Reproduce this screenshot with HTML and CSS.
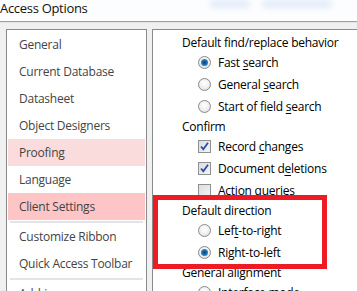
FILE: index.html
```html
<!DOCTYPE html>
<html>
<head>
<meta charset="utf-8">
<link rel="stylesheet" href="styles.css">
</head>
<body>
<div class="window">
  <div class="titlebar">
    <span class="title">Access Options</span>
    <span class="ghost ghost1"></span>
    <span class="ghost ghost2"></span>
  </div>
  <div class="body">
    <div class="nav">
      <div class="nav-item">General</div>
      <div class="nav-item">Current Database</div>
      <div class="nav-item">Datasheet</div>
      <div class="nav-item">Object Designers</div>
      <div class="nav-item hover">Proofing</div>
      <div class="nav-item">Language</div>
      <div class="nav-item selected">Client Settings</div>
      <div class="sep"></div>
      <div class="nav-item">Customize Ribbon</div>
      <div class="nav-item">Quick Access Toolbar</div>
      <div class="sep"></div>
      <div class="nav-item">Add-ins</div>
    </div>
    <div class="content">
      <div class="heading">Default find/replace behavior</div>
      <div class="opt"><span class="radio on"></span><span>Fast <u>s</u>earch</span></div>
      <div class="opt"><span class="radio"></span><span>General <u>s</u>earch</span></div>
      <div class="opt"><span class="radio"></span><span>Start of field <u>s</u>earch</span></div>
      <div class="heading">Confirm</div>
      <div class="opt"><span class="check on"><svg viewBox="0 0 13 13" width="13" height="13"><path d="M3 6.5 L5.3 9.2 L10 2.8" fill="none" stroke="#2a4fa8" stroke-width="1.8"/></svg></span><span>Record <u>c</u>hanges</span></div>
      <div class="opt"><span class="check on"><svg viewBox="0 0 13 13" width="13" height="13"><path d="M3 6.5 L5.3 9.2 L10 2.8" fill="none" stroke="#2a4fa8" stroke-width="1.8"/></svg></span><span>Document d<u>e</u>letions</span></div>
      <div class="opt"><span class="check"></span><span>Action queries</span></div>
      <div class="heading">Default direction</div>
      <div class="opt"><span class="radio"></span><span>Lef<u>t</u>-to-right</span></div>
      <div class="opt"><span class="radio on"></span><span>Ri<u>g</u>ht-to-left</span></div>
      <div class="heading">General alignment</div>
      <div class="opt"><span class="radio"></span><span>Interface mode</span></div>
      <div class="highlight-box"></div>
    </div>
  </div>
</div>
</body>
</html>
```

FILE: styles.css
```css
html, body {
  margin: 0;
  padding: 0;
  width: 357px;
  height: 291px;
  overflow: hidden;
  background: #f0f0f0;
}
.window {
  font-family: "Open Sans", "Noto Sans", sans-serif;
  font-size: 12px;
  color: #000;
  width: 357px;
  height: 291px;
  overflow: hidden;
}
.titlebar {
  position: relative;
  height: 21px;
  background: #fcfdfe;
  border-bottom: 1px solid #a0a0a0;
  overflow: hidden;
}
.title {
  position: relative;
  display: block;
  font-size: 13px;
  line-height: 16px;
  color: #111;
  letter-spacing: -0.3px;
  z-index: 1;
}
.ghost {
  position: absolute;
  top: 1px;
  height: 6px;
  border-radius: 3px;
  background: #8fb3e8;
  filter: blur(3px);
  opacity: 0.3;
}
.ghost1 { left: 210px; width: 40px; }
.ghost2 { left: 262px; width: 70px; }
.body {
  display: flex;
  gap: 5px;
  padding: 6px 0 0 6px;
  border-top: 1px solid #e4e4e4;
}
.nav {
  width: 141px;
  height: 300px;
  background: #fff;
  border: 1px solid #8a8a8a;
  padding: 1px 1px 0;
  box-sizing: border-box;
  flex: none;
}
.nav-item {
  height: 27px;
  line-height: 27px;
  padding-left: 11px;
  color: #444;
  white-space: nowrap;
  letter-spacing: -0.25px;
}
.nav-item.hover { background: #fadcdc; }
.nav-item.selected { background: #fdc5c5; }
.sep {
  height: 2px;
  margin: 1px 2px 0;
  background: #e2e4e8;
}
.content {
  position: relative;
  flex: 1;
  height: 300px;
  background: #fff;
  border: 1px solid #8a8a8a;
  border-right: none;
  padding: 3px 0 0 29px;
  box-sizing: border-box;
}
.heading {
  height: 18px;
  padding-top: 2px;
  line-height: 16px;
  box-sizing: border-box;
  white-space: nowrap;
  letter-spacing: -0.25px;
}
.opt {
  height: 22px;
  display: flex;
  align-items: center;
  padding-left: 16px;
  gap: 7px;
  white-space: nowrap;
  letter-spacing: -0.25px;
}
.opt u {
  text-decoration-thickness: 1px;
  text-underline-offset: 2px;
}
.radio {
  width: 13px;
  height: 13px;
  border-radius: 50%;
  box-sizing: border-box;
  border: 1px solid #8b8b8b;
  background: radial-gradient(circle at 50% 40%, #ffffff 0%, #f2f2f2 45%, #d6d6d6 100%);
  flex: none;
  position: relative;
}
.radio.on::after {
  content: "";
  position: absolute;
  left: 2px;
  top: 2px;
  width: 7px;
  height: 7px;
  border-radius: 50%;
  background: radial-gradient(circle at 50% 50%, #0d3c6e 0%, #1c6fb5 45%, #47a3e4 100%);
}
.check {
  width: 13px;
  height: 13px;
  box-sizing: border-box;
  border: 1px solid #8e8f8f;
  background: linear-gradient(135deg, #dcdde0, #f4f4f6);
  flex: none;
  position: relative;
}
.check svg {
  position: absolute;
  left: -1px;
  top: -1px;
}
.highlight-box {
  position: absolute;
  left: 0;
  top: 165px;
  width: 174px;
  height: 74px;
  border: 5px solid #ed1c24;
  box-sizing: border-box;
}
```
